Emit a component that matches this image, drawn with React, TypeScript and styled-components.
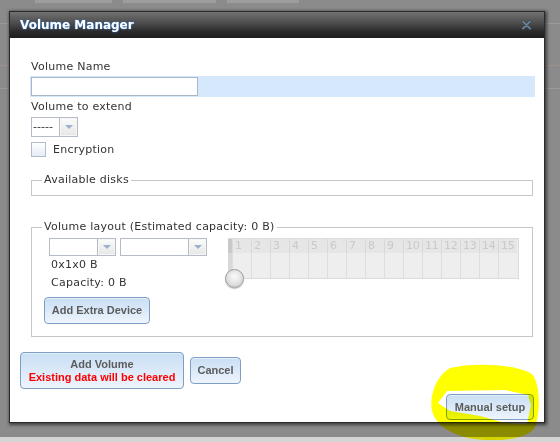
import React from "react";
import styled, { createGlobalStyle } from "styled-components";

const GlobalStyle = createGlobalStyle`
  html, body { margin: 0; padding: 0; }
  body {
    width: 560px; height: 442px; overflow: hidden;
    background: #8b8b8b;
    font-family: "DejaVu Sans", Verdana, sans-serif;
  }
  * { box-sizing: border-box; }
`;

const Page = styled.div`
  position: relative;
  width: 560px;
  height: 442px;
  overflow: hidden;
  background: #8b8b8b;
`;

/* ---------- page behind the modal ---------- */
const Backdrop = styled.div`
  display: flex;
  flex-direction: column;
  height: 100%;
`;
const TabStrip = styled.div`
  display: flex;
  gap: 11px;
  padding-left: 35px;
  height: 3px;
`;
const TabStub = styled.div<{ $w: number }>`
  width: ${(p) => p.$w}px;
  background: #9d9d9d;
`;
const BgRule = styled.div<{ $top: number; $color: string }>`
  margin-top: ${(p) => p.$top}px;
  height: 1px;
  background: ${(p) => p.$color};
`;
const BottomStrip = styled.div`
  margin-top: auto;
  height: 5px;
  background: #d4d4d4;
`;

/* ---------- dialog ---------- */
const Dialog = styled.div`
  position: absolute;
  left: 9px;
  top: 11px;
  width: 536px;
  height: 412px;
  border: 1px solid #2a2a2a;
  background: #ffffff;
  box-shadow: 1px 1px 3px 1px rgba(0, 0, 0, 0.55);
  display: flex;
  flex-direction: column;
`;
const TitleBar = styled.div`
  flex: none;
  height: 26px;
  display: flex;
  align-items: center;
  justify-content: space-between;
  padding: 0 12px 0 10px;
  background: linear-gradient(#727272 0%, #4a4a4a 45%, #2b2b2b 75%, #1f1f1f 100%);
`;
const Title = styled.span`
  font: bold 12px "DejaVu Sans", Verdana, sans-serif;
  color: #ffffff;
  text-shadow: 0 0 2px #3c7fd0, 0 0 1px #3c7fd0;
`;
const CloseIcon = styled.svg`
  display: block;
`;

const Body = styled.div`
  flex: 1;
  display: flex;
  flex-direction: column;
  padding: 22px 9px 0 10px;
  color: #333333;
  font-size: 11px;
  letter-spacing: 0.25px;
`;
const Label = styled.div<{ $mt?: number }>`
  line-height: 14px;
  margin: ${(p) => p.$mt ?? 0}px 0 0 11px;
`;
const FocusRow = styled.div`
  margin: 2px 0 0 10px;
  height: 21px;
  padding: 1px 0 1px 1px;
  background: #d6e9fc;
  display: flex;
`;
const TextInput = styled.div`
  width: 167px;
  height: 19px;
  border: 1px solid #aab6c6;
  background: #ffffff;
`;

/* select (dojo filtering select look) */
const SelectBox = styled.div<{ $w: number; $h: number; $ml?: number; $mt?: number }>`
  width: ${(p) => p.$w}px;
  height: ${(p) => p.$h}px;
  margin: ${(p) => p.$mt ?? 0}px 0 0 ${(p) => p.$ml ?? 0}px;
  border: 1px solid #b5bcc7;
  background: #ffffff;
  display: flex;
  flex: none;
`;
const SelectText = styled.div`
  flex: 1;
  padding-left: 1px;
  font-size: 11px;
  line-height: 17px;
  color: #333;
  overflow: hidden;
  letter-spacing: 0;
`;
const SelectArrow = styled.div`
  width: 18px;
  border-left: 1px solid #b5bcc7;
  background: linear-gradient(#fbfbfb, #e6e6e6);
  box-shadow: inset 0 0 0 1px #f6f6f6;
  display: flex;
  align-items: center;
  justify-content: center;
  &::after {
    content: "";
    border-left: 4px solid transparent;
    border-right: 4px solid transparent;
    border-top: 4px solid #9bb0cc;
  }
`;

const CheckRow = styled.label`
  margin: 5px 0 0 11px;
  display: flex;
  align-items: center;
  gap: 7px;
  line-height: 15px;
`;
const CheckBox = styled.span`
  width: 15px;
  height: 15px;
  border: 1px solid #b3bccb;
  background: linear-gradient(#ffffff, #e4ecf6);
`;

/* fieldsets */
const FieldSet = styled.fieldset<{ $mt: number; $pb: number }>`
  margin: ${(p) => p.$mt}px 2px 0 11px;
  padding: 0 9px ${(p) => p.$pb}px 10px;
  border: 1px solid #c6c6c6;
  min-width: 0;
`;
const Legend = styled.legend`
  padding: 0 2px;
  font-size: 11px;
  line-height: 14px;
  color: #333;
`;
const LayoutRow = styled.div`
  display: flex;
  align-items: flex-start;
  margin-top: 4px;
`;
const LeftCol = styled.div`
  width: 186px;
  flex: none;
  display: flex;
  flex-direction: column;
`;
const SelectPair = styled.div`
  display: flex;
  gap: 4px;
  margin-left: 7px;
`;
const InfoLine = styled.div`
  margin-left: 9px;
  line-height: 18px;
`;

/* disk grid */
const DiskArea = styled.div`
  position: relative;
  width: 291px;
`;
const DiskTable = styled.div`
  display: grid;
  grid-template-columns: 4px repeat(15, 19px);
  grid-template-rows: 14px 25px;
  border: 1px solid #dcdcdc;
  border-left: none;
  background: #eeeeee;
`;
const Track = styled.div<{ $dark?: boolean }>`
  background: ${(p) => (p.$dark ? "#c9c9c9" : "#d8d8d8")};
`;
const HeadCell = styled.div`
  background: #e6e6e6;
  border-left: 1px solid #d9d9d9;
  color: #c9c9c9;
  font-size: 11px;
  line-height: 14px;
  padding-left: 2px;
  letter-spacing: -0.3px;
  white-space: nowrap;
  overflow: hidden;
`;
const BodyCell = styled.div`
  border-left: 1px solid #dddddd;
  background: #eeeeee;
`;
const Knob = styled.div`
  position: absolute;
  left: -3px;
  top: 31px;
  width: 19px;
  height: 19px;
  border-radius: 50%;
  border: 1px solid #9e9e9e;
  background: radial-gradient(circle at 50% 40%, #fafafa 0%, #e6e6e6 45%, #c4c4c4 100%);
  box-shadow: 0 1px 1px rgba(0, 0, 0, 0.25);
`;

/* buttons */
const Button = styled.button<{ $w: number; $h: number; $ml?: number; $mt?: number }>`
  width: ${(p) => p.$w}px;
  height: ${(p) => p.$h}px;
  margin: ${(p) => p.$mt ?? 0}px 0 0 ${(p) => p.$ml ?? 0}px;
  padding: 0;
  flex: none;
  border: 1px solid #7f9ec4;
  border-radius: 4px;
  background: linear-gradient(#c9def4 0%, #d9e8f8 45%, #eef5fd 100%);
  box-shadow: inset 0 1px 0 rgba(255, 255, 255, 0.5);
  font: bold 11px "Liberation Sans", Arial, sans-serif;
  letter-spacing: 0;
  color: #5c5c5c;
  line-height: 13px;
  display: flex;
  flex-direction: column;
  align-items: center;
  justify-content: center;
`;
const Warn = styled.span`
  color: #ff0000;
`;
const ActionRow = styled.div`
  display: flex;
  align-items: center;
  gap: 6px;
  margin-top: 15px;
`;
const FooterRow = styled.div`
  display: flex;
  justify-content: flex-end;
  margin-top: 5px;
  padding-right: 1px;
`;

/* highlighter mark drawn over the screenshot */
const Highlighter = styled.svg`
  position: absolute;
  left: 0;
  top: 0;
  pointer-events: none;
  mix-blend-mode: multiply;
`;

export default function App() {
  const cols = Array.from({ length: 15 }, (_, i) => i + 1);
  return (
    <>
      <GlobalStyle />
      <Page>
        <Backdrop>
          <TabStrip>
            <TabStub $w={77} />
            <TabStub $w={93} />
            <TabStub $w={72} />
          </TabStrip>
          <BgRule $top={20} $color="#9a9a9a" />
          <BgRule $top={41} $color="#a08f8a" />
          <BgRule $top={22} $color="#9a9a9a" />
          <BottomStrip />
        </Backdrop>

        <Dialog>
          <TitleBar>
            <Title>Volume Manager</Title>
            <CloseIcon width="11" height="10" viewBox="0 0 11 10">
              <path d="M2 1.5 L9 8.5 M9 1.5 L2 8.5" stroke="#3f4a56" strokeWidth="3" strokeLinecap="round" />
              <path d="M2 1.5 L9 8.5 M9 1.5 L2 8.5" stroke="#6f86a0" strokeWidth="1.6" strokeLinecap="round" />
            </CloseIcon>
          </TitleBar>

          <Body>
            <Label>Volume Name</Label>
            <FocusRow>
              <TextInput />
            </FocusRow>
            <Label $mt={3}>Volume to extend</Label>
            <SelectBox $w={47} $h={20} $ml={11} $mt={3}>
              <SelectText>-----</SelectText>
              <SelectArrow />
            </SelectBox>
            <CheckRow>
              <CheckBox />
              Encryption
            </CheckRow>

            <FieldSet $mt={16} $pb={8}>
              <Legend>Available disks</Legend>
            </FieldSet>

            <FieldSet $mt={24} $pb={12}>
              <Legend>Volume layout (Estimated capacity: 0 B)</Legend>
              <LayoutRow>
                <LeftCol>
                  <SelectPair>
                    <SelectBox $w={67} $h={18}>
                      <SelectText />
                      <SelectArrow />
                    </SelectBox>
                    <SelectBox $w={87} $h={18}>
                      <SelectText />
                      <SelectArrow />
                    </SelectBox>
                  </SelectPair>
                  <InfoLine>0x1x0 B</InfoLine>
                  <InfoLine>Capacity: 0 B</InfoLine>
                  <Button $w={106} $h={27} $ml={2} $mt={5}>
                    Add Extra Device
                  </Button>
                </LeftCol>
                <DiskArea>
                  <DiskTable>
                    <Track $dark />
                    {cols.map((n) => (
                      <HeadCell key={`h${n}`}>{n}</HeadCell>
                    ))}
                    <Track />
                    {cols.map((n) => (
                      <BodyCell key={`b${n}`} />
                    ))}
                  </DiskTable>
                  <Knob />
                </DiskArea>
              </LayoutRow>
            </FieldSet>

            <ActionRow>
              <Button $w={164} $h={37}>
                <span>Add Volume</span>
                <Warn>Existing data will be cleared</Warn>
              </Button>
              <Button $w={51} $h={27}>
                Cancel
              </Button>
            </ActionRow>
            <FooterRow>
              <Button $w={88} $h={26}>
                Manual setup
              </Button>
            </FooterRow>
          </Body>
        </Dialog>

        <Highlighter width="560" height="442" viewBox="0 0 560 442">
          <path
            fillRule="evenodd"
            fill="#ffff00"
            d="M450 368 C474 362 515 364 532 374 C541 384 540 414 535 427 C528 441 490 442 468 438 C449 433 436 425 432 411 C429 396 436 376 450 368 Z
               M438 403 L447 391 L505 390 L528 395 L531 405 L527 424 L505 423 L480 416 L450 411 Z"
          />
        </Highlighter>
      </Page>
    </>
  );
}
